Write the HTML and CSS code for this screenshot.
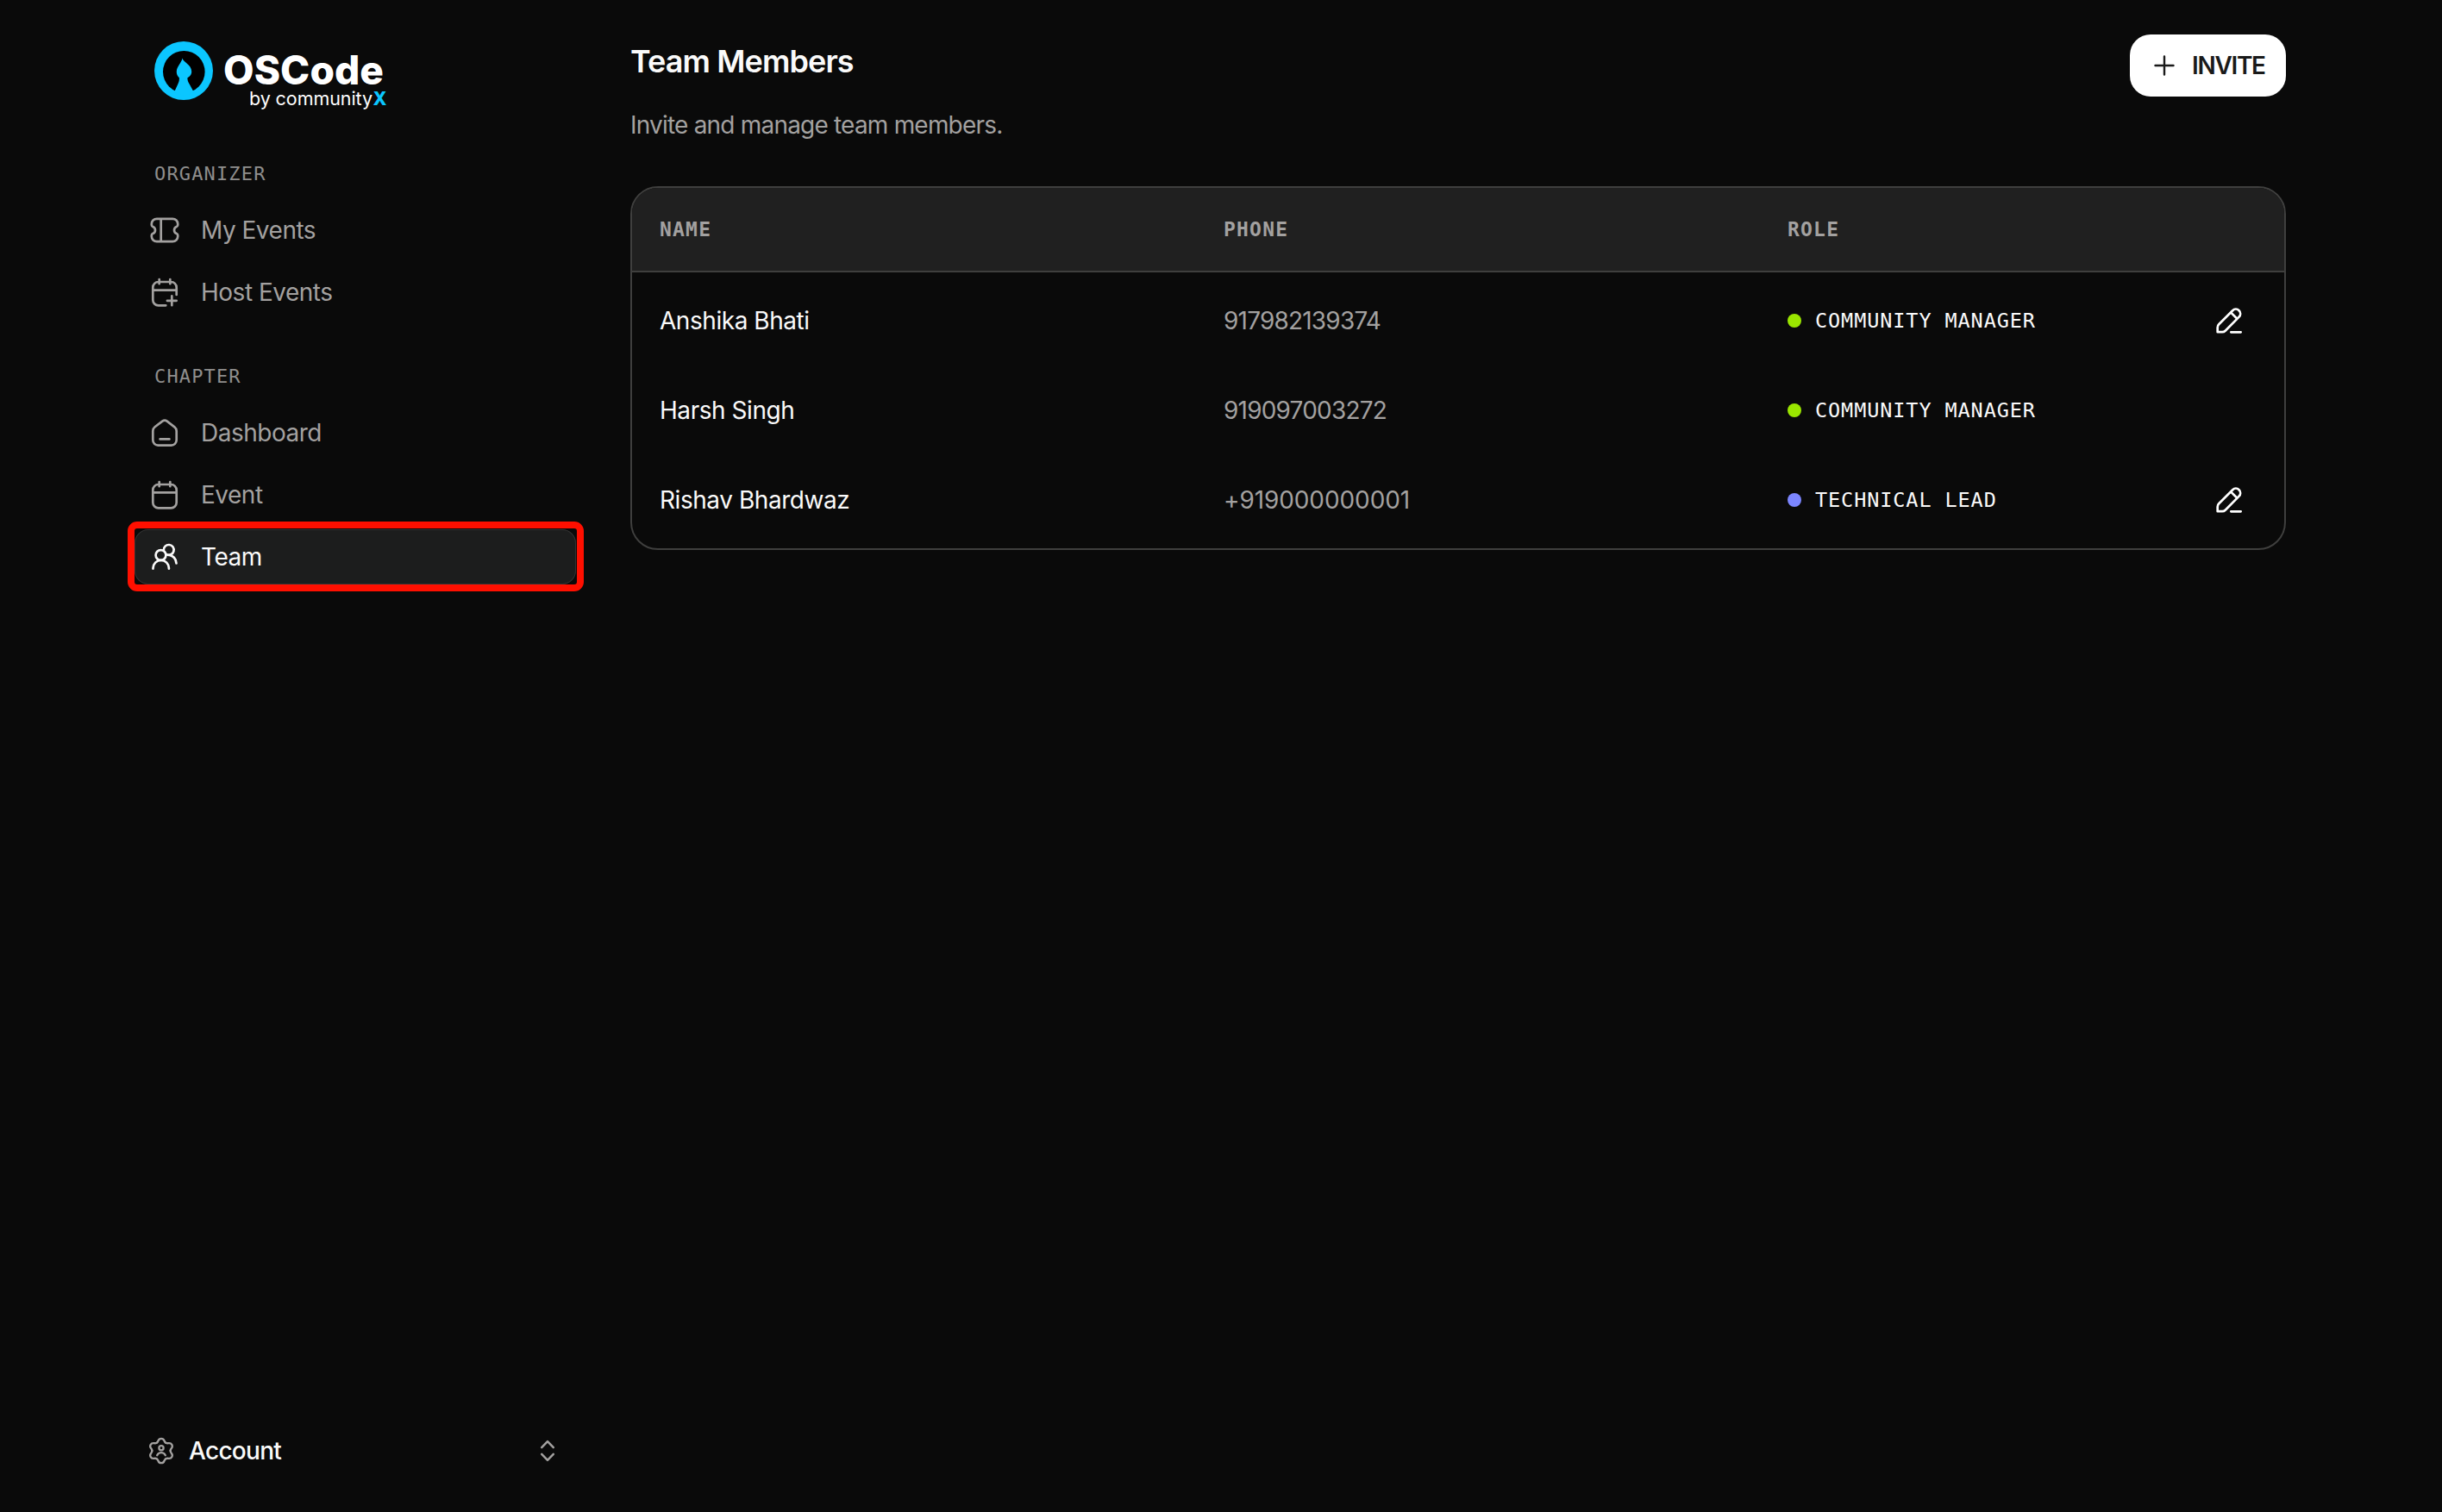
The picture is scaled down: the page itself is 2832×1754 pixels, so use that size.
FILE: index.html
```html
<!DOCTYPE html>
<html lang="en">
<head>
  <meta charset="UTF-8" />
  <meta name="viewport" content="width=device-width, initial-scale=1.0"/>
  <title>Team Members | OSCode</title>
  <link rel="stylesheet" href="styles.css">
</head>
<body>

  <!-- Sidebar -->
  <aside class="sidebar">
    <a class="logo" href="#">
      <svg width="276" height="84" viewBox="0 0 276 84">
        <circle cx="34" cy="34" r="34" fill="#0bc6ff"/>
        <circle cx="34.3" cy="35.2" r="24.3" fill="#000"/>
        <path d="M32.6 19.5c.6 4.600 10.600 7.500 10.600 15.500 0 3.800-2.400 6-4.800 7.200 0 3 .6 4.500 2.400 7.600l5 9.200-11.600 4.200-11.200-4.200 4.200-9.200c1.400-3 1.800-4.500 1.700-7.600-2-1.600-3.400-4-3.100-7.600.4-5.800 5.200-9 6.800-15.100z" fill="#0bc6ff"/>
        <text class="logo-name" x="80" y="50" textLength="186">OSCode</text>
        <text class="logo-by" x="110" y="73.500" textLength="143">by community</text>
        <text class="logo-x" x="253.500" y="73.500" textLength="14">X</text>
      </svg>
    </a>

    <div class="nav-section">
      <div class="nav-label">ORGANIZER</div>
      <nav class="nav-list">
        <a class="nav-item" href="#">
          <svg class="icon" viewBox="0 0 36 36">
            <path d="M8.800 4.800h18.400a6 6 0 0 1 6 6v1.300c0 .8-.6 1.500-1.400 1.800a4.400 4.400 0 0 0 0 8.200c.8.3 1.400 1 1.400 1.800v1.300a6 6 0 0 1-6 6H8.800a6 6 0 0 1-6-6v-1.300c0-.8.6-1.500 1.400-1.800a4.400 4.400 0 0 0 0-8.200c-.8-.3-1.400-1-1.400-1.800v-1.300a6 6 0 0 1 6-6zM13.700 5v26"/>
          </svg>
          <span>My Events</span>
        </a>
        <a class="nav-item" href="#">
          <svg class="icon" viewBox="0 0 36 36">
            <path d="M31.700 21v-8.600a6.400 6.400 0 0 0-6.400-6.400H10.700a6.400 6.400 0 0 0-6.400 6.400v14.500a6.400 6.400 0 0 0 6.400 6.400h8.600M4.500 15.600h27M11.700 3v5.200M24.300 3v5.200M26.300 22.400v10.800M20.900 27.800h10.800"/>
          </svg>
          <span>Host Events</span>
        </a>
      </nav>
    </div>

    <div class="nav-section">
      <div class="nav-label">CHAPTER</div>
      <nav class="nav-list">
        <a class="nav-item" href="#">
          <svg class="icon" viewBox="0 0 36 36">
            <path d="M15.300 4.700a4.600 4.600 0 0 1 5.400 0l8.700 6.600a6 6 0 0 1 2.300 4.700v10.600a6 6 0 0 1-6 6H10.300a6 6 0 0 1-6-6V16a6 6 0 0 1 2.300-4.700zM12.600 25.400h10.800"/>
          </svg>
          <span>Dashboard</span>
        </a>
        <a class="nav-item" href="#">
          <svg class="icon" viewBox="0 0 36 36">
            <rect x="4.300" y="6" width="27.400" height="27.300" rx="6.400"/>
            <path d="M4.500 15.300h27M11.700 3v5.200M24.300 3v5.200"/>
          </svg>
          <span>Event</span>
        </a>
        <a class="nav-item active" href="#">
          <svg class="icon" viewBox="0 0 36 36">
            <circle cx="13.500" cy="16" r="5.900"/>
            <path d="M4.500 31.700v-.6a9.200 9.200 0 0 1 18.400 0v.6M16.800 10.300a5.900 5.900 0 1 1 3.300 4.900M22.700 15.600c4.600.6 8.800 4.600 8.800 9.900"/>
          </svg>
          <span>Team</span>
        </a>
      </nav>
    </div>

    <a class="account" href="#">
      <svg class="icon account-icon" viewBox="0 0 32 32">
        <defs>
          <path id="tooth" d="M10.700 6.800C13.500 5.200 11.600 1.800 16 1.800s2.500 3.400 5.300 5"/>
        </defs>
        <use href="#tooth"/>
        <use href="#tooth" transform="rotate(60 16 16)"/>
        <use href="#tooth" transform="rotate(120 16 16)"/>
        <use href="#tooth" transform="rotate(180 16 16)"/>
        <use href="#tooth" transform="rotate(240 16 16)"/>
        <use href="#tooth" transform="rotate(300 16 16)"/>
        <circle cx="16" cy="12.700" r="2.600"/>
        <path d="M11.200 21.200c1-2 2.700-3 4.800-3s3.800 1 4.800 3"/>
      </svg>
      <span>Account</span>
      <svg class="icon chevrons" viewBox="0 0 20 28">
        <path d="M3.200 10.200 10 3.200l6.800 7M3.200 17.800l6.800 7 6.800-7"/>
      </svg>
    </a>
  </aside>

  <!-- Team page -->
  <main class="main">
    <header class="page-header">
      <div>
        <h1>Team Members</h1>
        <p>Invite and manage team members.</p>
      </div>
      <button class="invite-btn" type="button">
        <svg class="plus" viewBox="0 0 24 24"><path d="M12 1.500v21M1.500 12h21"/></svg>
        <span>INVITE</span>
      </button>
    </header>

    <div class="table">
      <div class="table-head">
        <div>NAME</div>
        <div>PHONE</div>
        <div>ROLE</div>
      </div>
      <div class="table-body">
        <div class="table-row">
          <div class="name">Anshika Bhati</div>
          <div class="phone">917982139374</div>
          <div class="role"><span class="dot green"></span>COMMUNITY MANAGER</div>
          <svg class="edit" viewBox="0 0 32 32">
            <path d="M2.700 29.200v-5.300a5 5 0 0 1 1.500-3.600L20.200 4.200a5 5 0 0 1 7.400 7.400L11.700 27.700a5 5 0 0 1-3.600 1.500zM18 6.400l7.400 7.400M18.300 29.300h11.400"/>
          </svg>
        </div>
        <div class="table-row">
          <div class="name">Harsh Singh</div>
          <div class="phone">919097003272</div>
          <div class="role"><span class="dot green"></span>COMMUNITY MANAGER</div>
        </div>
        <div class="table-row">
          <div class="name">Rishav Bhardwaz</div>
          <div class="phone intl">+919000000001</div>
          <div class="role"><span class="dot indigo"></span>TECHNICAL LEAD</div>
          <svg class="edit" viewBox="0 0 32 32">
            <path d="M2.700 29.200v-5.300a5 5 0 0 1 1.500-3.600L20.200 4.200a5 5 0 0 1 7.400 7.400L11.700 27.700a5 5 0 0 1-3.600 1.500zM18 6.400l7.400 7.400M18.300 29.300h11.400"/>
          </svg>
        </div>
      </div>
    </div>
  </main>

</body>
</html>
```
FILE: styles.css
```css
/* Basic Reset & Font */
* {
  box-sizing: border-box;
  margin: 0;
  padding: 0;
}

body {
  font-family: Inter, sans-serif;
  font-size: 28px;
  background-color: #0a0a0a;
  color: #fafafa;
  display: flex;
  gap: 63px;
  min-height: 100vh;
  padding: 0 181px 0 156px;
}

a {
  color: inherit;
  text-decoration: none;
}

/* Sidebar */
.sidebar {
  width: 512px;
  flex-shrink: 0;
  display: flex;
  flex-direction: column;
  padding: 48px 0 39px;
}

.logo {
  height: 84px;
  margin: 0 0 54px 23px;
}

.logo svg {
  display: block;
}

.logo-name {
  font-size: 46px;
  font-weight: 800;
  fill: #fff;
}

.logo-by {
  font-size: 21.5px;
  font-weight: 400;
  fill: #fff;
}

.logo-x {
  font-size: 21px;
  font-weight: 800;
  fill: #0bc6ff;
}

.nav-section {
  margin-bottom: 49px;
}

.nav-label {
  font-family: "DejaVu Sans Mono", monospace;
  font-size: 22px;
  letter-spacing: 1.15px;
  line-height: 32px;
  color: #8f8e8d;
  padding-left: 23px;
  margin-bottom: 17px;
}

.nav-section + .nav-section {
  margin-top: 1px;
}

.nav-list {
  display: flex;
  flex-direction: column;
  gap: 8px;
}

.nav-item {
  position: relative;
  display: flex;
  align-items: center;
  gap: 24px;
  height: 64px;
  padding-left: 17px;
  border-radius: 16px;
  line-height: 65px;
  letter-spacing: -0.5px;
  color: #a3a1a0;
}

.nav-item.active {
  background-color: #1c1d1d;
  box-shadow: inset 0 0 0 1px #333;
  color: #fafafa;
}

/* Highlight frame around the current item */
.nav-item.active::after {
  content: "";
  position: absolute;
  inset: -9px -9px -8px -8px;
  border: 8px solid #ff0f00;
  border-radius: 11px;
}

.icon {
  width: 36px;
  height: 36px;
  flex-shrink: 0;
  fill: none;
  stroke: currentColor;
  stroke-width: 2.7;
  stroke-linecap: round;
  stroke-linejoin: round;
}

/* Account */
.account {
  display: flex;
  align-items: center;
  height: 64px;
  margin-top: auto;
  padding: 0 23px 0 15px;
  line-height: 64px;
  font-weight: 500;
  letter-spacing: -0.7px;
}

.account-icon {
  width: 32px;
  height: 32px;
  margin-right: 16px;
  stroke-width: 2.3;
  color: #a3a1a0;
}

.chevrons {
  width: 20px;
  height: 28px;
  margin-left: auto;
  stroke-width: 2.5;
  color: #a3a1a0;
}

/* Main */
.main {
  flex: 1;
  padding-top: 40px;
}

.page-header {
  display: flex;
  justify-content: space-between;
  align-items: flex-start;
  height: 176px;
}

.page-header h1 {
  font-size: 36px;
  font-weight: 600;
  line-height: 62px;
  letter-spacing: -0.9px;
}

.page-header p {
  line-height: 40px;
  letter-spacing: -0.8px;
  margin-top: 23px;
  color: #a3a1a0;
}

.invite-btn {
  display: flex;
  align-items: center;
  gap: 20px;
  width: 181px;
  height: 72px;
  padding-left: 28px;
  border: none;
  border-radius: 24px;
  background-color: #fff;
  color: #1a1a1a;
  font-family: inherit;
  font-size: 28px;
  font-weight: 600;
  letter-spacing: -1.3px;
}

.plus {
  width: 24px;
  height: 24px;
  fill: none;
  stroke: currentColor;
  stroke-width: 2.4;
  stroke-linecap: round;
}

/* Table */
.table {
  border: 2px solid #3f3f3e;
  border-radius: 32px;
  overflow: hidden;
}

.table-head,
.table-row {
  display: grid;
  grid-template-columns: 654px 654px 1fr auto;
  align-items: center;
  padding: 0 48px 0 32px;
}

.table-head {
  height: 98px;
  background-color: #202020;
  border-bottom: 2px solid #3f3f3e;
  font-family: "DejaVu Sans Mono", monospace;
  font-size: 23px;
  font-weight: 700;
  letter-spacing: 1.2px;
  color: #a3a1a0;
}

.table-body {
  padding: 4px 0;
}

.table-row {
  height: 104px;
}

.name {
  letter-spacing: -0.45px;
}

.phone {
  letter-spacing: -0.8px;
  color: #a3a1a0;
}

.phone.intl {
  letter-spacing: -0.1px;
}

.role {
  display: flex;
  align-items: center;
  font-family: "DejaVu Sans Mono", monospace;
  font-size: 23.5px;
  letter-spacing: 0.9px;
}

.dot {
  width: 16px;
  height: 16px;
  margin-right: 16px;
  border-radius: 50%;
}

.dot.green {
  background-color: #9ae600;
}

.dot.indigo {
  background-color: #7c86ff;
}

.edit {
  width: 32px;
  height: 32px;
  fill: none;
  stroke: #fff;
  stroke-width: 2.7;
  stroke-linecap: round;
  stroke-linejoin: round;
}
```
